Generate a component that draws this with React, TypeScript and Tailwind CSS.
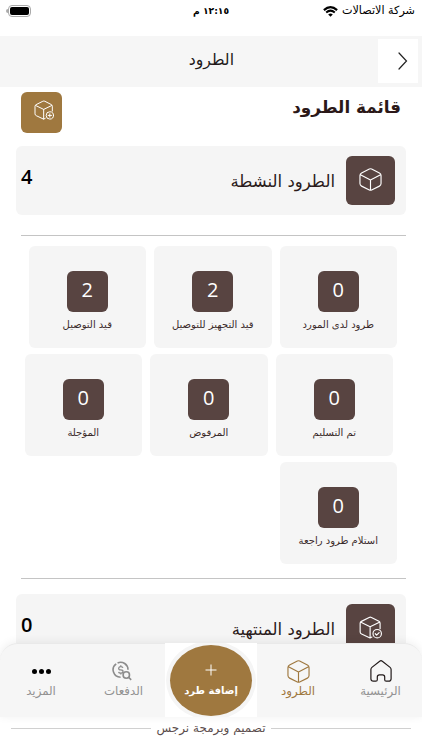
import type { ReactNode } from 'react';
import clsx from 'clsx';

type Badge = 'plus' | 'check';

interface Stat {
  label: string;
  value: number;
}

const ACTIVE_ROWS: { offset: string; items: Stat[] }[] = [
  {
    offset: 'pr-[25px]',
    items: [
      { label: 'طرود لدى المورد', value: 0 },
      { label: 'قيد التجهيز للتوصيل', value: 2 },
      { label: 'قيد التوصيل', value: 2 },
    ],
  },
  {
    offset: 'pr-[29px]',
    items: [
      { label: 'تم التسليم', value: 0 },
      { label: 'المرفوض', value: 0 },
      { label: 'المؤجلة', value: 0 },
    ],
  },
  {
    offset: 'pr-[25px]',
    items: [{ label: 'استلام طرود راجعة', value: 0 }],
  },
];

function BoxIcon({ badge, className }: { badge?: Badge; className?: string }) {
  return (
    <svg viewBox="0 0 24 24" fill="none" stroke="currentColor" strokeWidth="1.2" strokeLinecap="round" strokeLinejoin="round" className={className}>
      {badge ? (
        <>
          <path d="M13.5 22 11.5 23 2.7 18.8Q1.2 18.1 1.2 16.6V7.6Q1.2 6.3 2.5 5.6L10.6 1.5Q11.8.9 13 1.5L20.8 5.5Q22 6.2 22 7.5V13.3M2 6.6 11.6 11.3 21.3 6.6M11.6 11.3V22.8" />
          <circle cx="19" cy="18.5" r="4.4" />
          <path d={badge === 'plus' ? 'M17 18.5h4M19 16.5v4' : 'M17 18.5l1.4 1.4 2.6-2.6'} />
        </>
      ) : (
        <path d="M10.8 1.1Q12 .5 13.2 1.1L21.3 5.2Q23 6.1 23 7.9V16.3Q23 18.1 21.3 18.9L13.2 22.9Q12 23.5 10.8 22.9L2.7 18.9Q1 18.1 1 16.3V7.9Q1 6.1 2.7 5.2ZM2 7.2 12 12.5 22 7.2M12 12.5V23.2" />
      )}
    </svg>
  );
}

function HomeIcon() {
  return (
    <svg viewBox="0 0 22 22" fill="none" stroke="currentColor" strokeWidth="1.2" strokeLinejoin="round" className="size-[22px]">
      <path d="M.9 9.6Q.9 8.2 1.9 7.4L9.7 1.2Q11 .2 12.3 1.2L20.1 7.4Q21.1 8.2 21.1 9.6V18.7Q21.1 21.2 18.6 21.2H16.2Q14.7 21.2 14.7 19.7V17Q14.7 14.9 12.6 14.9H9.4Q7.3 14.9 7.3 17V19.7Q7.3 21.2 5.8 21.2H3.4Q.9 21.2.9 18.7Z" />
    </svg>
  );
}

function PaymentsIcon() {
  return (
    <svg viewBox="0 0 20 20" fill="none" stroke="currentColor" strokeWidth="1.6" className="size-5">
      <path d="M8.6 16.2A7.4 7.4 0 0 1 4.2 2.8M5.6 1.9A7.4 7.4 0 0 1 16 8.8" />
      <path d="M10.9 6.9Q10.6 5.6 8.8 5.6T6.7 7.2 8.8 8.9 11 10.6 8.8 12.2 6.6 10.9M8.8 4.3V5.6M8.8 12.2V13.5" strokeWidth="1.3" />
      <circle cx="14.3" cy="14" r="3.2" />
      <path d="m16.6 16.3 2.6 2.6" />
    </svg>
  );
}

function WifiIcon() {
  return (
    <svg viewBox="0 0 16 12" className="h-[11px] w-[15px]">
      <path d="M.8 4.5Q8-1.9 15.2 4.5" fill="none" stroke="currentColor" strokeWidth="2.4" />
      <path d="M3.3 7.1Q8 3 12.7 7.1" fill="none" stroke="currentColor" strokeWidth="2.2" />
      <path d="M5.5 9.2Q8 7 10.5 9.2L8 11.7Z" fill="currentColor" />
    </svg>
  );
}

function StatCard({ label, value }: Stat) {
  return (
    <div className="flex h-[101.5px] w-[117.5px] shrink-0 flex-col items-center rounded-md bg-[#f5f5f5] pt-[25px]">
      <div className="flex size-[41px] items-center justify-center rounded-md bg-[#584441] pb-1 font-['Open_Sans'] text-[20px] font-medium text-white">
        {value}
      </div>
      <span className="mt-[5px] text-[10px] leading-4 whitespace-nowrap text-[#3b2b2b]">{label}</span>
    </div>
  );
}

function SummaryCard({ title, count, badge }: { title: string; count: number; badge?: Badge }) {
  return (
    <section className="mr-4 flex h-[69px] w-[390px] shrink-0 items-start rounded-md bg-[#f5f5f5] pt-2.5 pr-[11px] pl-[5px]">
      <div className="flex size-[49px] items-center justify-center rounded-md bg-[#584441] text-white">
        <BoxIcon badge={badge} className="mb-0.5 size-[23px]" />
      </div>
      <h2 className="mt-3.5 mr-[11px] text-[16.5px] leading-6 text-[#2b1b1b]">{title}</h2>
      <span className="mt-[9px] mr-auto font-['Open_Sans'] text-[20px] leading-6 font-semibold text-black">
        {count}
      </span>
    </section>
  );
}

function NavItem({ label, active, className, children }: { label: string; active?: boolean; className: string; children: ReactNode }) {
  return (
    <a className={clsx('flex flex-col items-center pt-4', className)}>
      <span className={clsx('flex h-[22px] items-center', active ? 'text-[#9f783f]' : 'text-[#221a1a]')}>{children}</span>
      <span className={clsx('text-[11.8px] leading-[18px] whitespace-nowrap', active ? 'text-[#9f783f]' : 'text-[#929292]')}>{label}</span>
    </a>
  );
}

export default function App() {
  return (
    <div dir="rtl" className="flex h-[750px] w-[422px] flex-col overflow-hidden bg-white font-['DejaVu_Sans',sans-serif]">
      {/* Status bar */}
      <div className="grid h-9 shrink-0 grid-cols-3 items-start pt-[3px] leading-4 text-black">
        <div className="flex items-center gap-1 pr-[7px] text-[11.2px] whitespace-nowrap">
          <span>شركة الاتصالات</span>
          <WifiIcon />
        </div>
        <span className="text-center text-[9.2px] font-semibold">١٢:١٥ م</span>
        <div className="flex h-[15px] items-center justify-end pl-1.5">
          <div className="h-3 w-[23px] rounded-[4px] border border-[#aaa] p-px">
            <div className="h-full rounded-[2px] bg-black" />
          </div>
          <div className="h-1 w-0.5 rounded-l bg-[#aaa]" />
        </div>
      </div>

      {/* Header */}
      <header className="flex h-[51px] shrink-0 items-start bg-[#f6f6f6] pt-[3px] pr-1">
        <button className="flex h-11 w-10 items-center justify-start bg-white pr-[10px] text-[#222]">
          <svg viewBox="0 0 10 18" fill="none" stroke="currentColor" strokeWidth="1.2" strokeLinecap="round" className="h-[18px] w-[10px]">
            <path d="m1 1 7.5 8L1 17" />
          </svg>
        </button>
        <h1 className="mt-[9px] mr-[144px] text-[15.7px] leading-6 text-[#211919]">الطرود</h1>
      </header>

      <main className="flex h-[556px] shrink-0 flex-col overflow-hidden">
        <div className="flex h-[59px] shrink-0 items-start justify-between pt-[5px] pr-[21px] pl-[21px]">
          <h2 className="mt-[3px] text-[16.8px] leading-6 font-bold text-[#2b1818]">قائمة الطرود</h2>
          <button className="flex size-[41px] items-center justify-center rounded-md bg-[#9f783f] pb-1.5 pl-1 text-white">
            <BoxIcon badge="plus" className="size-5" />
          </button>
        </div>

        <SummaryCard title="الطرود النشطة" count={4} />
        <hr className="mt-5 mr-4 ml-[21px] shrink-0 border-[#c4c4c4]" />
        <div className="flex flex-col gap-[6.5px] pt-[10px] pb-[14.5px]">
          {ACTIVE_ROWS.map((row, i) => (
            <div key={i} className={clsx('flex gap-2', row.offset)}>
              {row.items.map((item) => (
                <StatCard key={item.label} {...item} />
              ))}
            </div>
          ))}
        </div>
        <hr className="mr-4 mb-[15px] ml-[21px] shrink-0 border-[#c4c4c4]" />
        <SummaryCard title="الطرود المنتهية" count={0} badge="check" />
      </main>

      {/* Bottom navigation */}
      <nav className="relative flex h-[74px] shrink-0 rounded-t-[18px] bg-white shadow-[0_-1px_10px_rgba(0,0,0,0.07)]">
        <div className="flex w-[165px] rounded-tr-[18px] border-t border-[#e9e9e9] bg-[#f6f6f6]">
          <NavItem label="الرئيسية" className="w-[83px]">
            <HomeIcon />
          </NavItem>
          <NavItem label="الطرود" active className="w-[82px]">
            <BoxIcon className="size-[23px]" />
          </NavItem>
        </div>
        <div className="flex w-[92px] items-center justify-center overflow-hidden">
          <button className="flex h-[71px] w-[82px] flex-col items-center rounded-[50%] bg-[#9f783f] pt-[19px] text-white ring-4 ring-[#f5f5f5]">
            <svg viewBox="0 0 12 12" stroke="currentColor" className="size-3">
              <path d="M6 .5v11M.5 6h11" />
            </svg>
            <span className="mt-[5px] text-[10px] leading-5 font-bold whitespace-nowrap">إضافة طرد</span>
          </button>
        </div>
        <div className="flex w-[165px] rounded-tl-[18px] border-t border-[#e9e9e9] bg-[#f6f6f6]">
          <NavItem label="الدفعات" className="w-[83px]">
            <span className="pr-1 text-[#8c8c8c]">
              <PaymentsIcon />
            </span>
          </NavItem>
          <NavItem label="المزيد" className="w-[82px]">
            <span className="flex gap-0.5">
              <i className="size-[5px] rounded-full bg-black" />
              <i className="size-[5px] rounded-full bg-black" />
              <i className="size-[5px] rounded-full bg-black" />
            </span>
          </NavItem>
        </div>
      </nav>

      <footer className="flex h-[33px] shrink-0 items-start gap-[6px] px-[11px] text-[#5c4e4e]">
        <span className="mt-[11px] h-px flex-1 bg-[#d0d0d0]" />
        <span className="text-[12px] leading-[22px]">تصميم وبرمجة نرجس</span>
        <span className="mt-[11px] h-px flex-1 bg-[#d0d0d0]" />
      </footer>
    </div>
  );
}
